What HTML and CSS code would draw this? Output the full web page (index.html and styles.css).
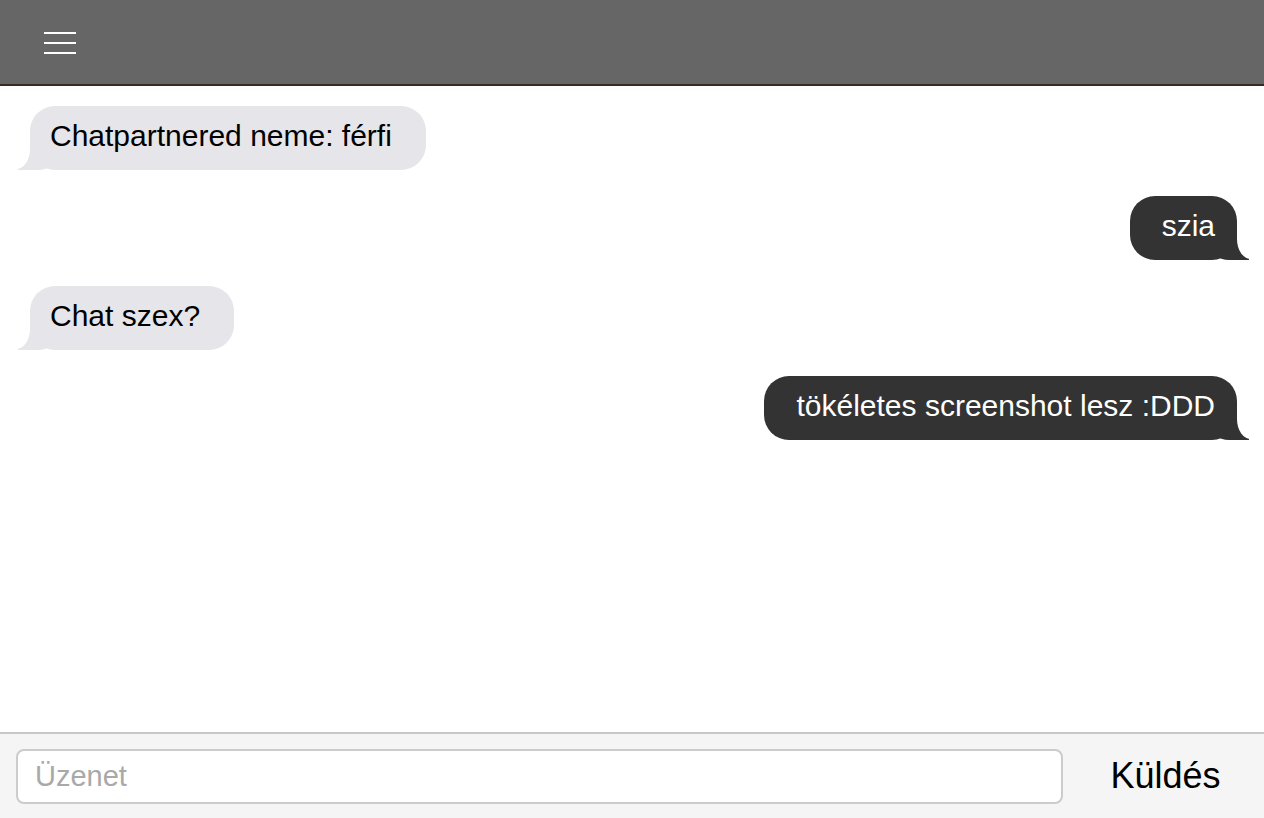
FILE: index.html
```html
<!DOCTYPE html>
<html lang="hu">
<head>
<meta charset="utf-8">
<title>Chat</title>
<link rel="stylesheet" href="styles.css">
</head>
<body>
<div class="app">
  <header class="topbar">
    <button class="menu" aria-label="Menü">
      <span class="menu-line"></span>
      <span class="menu-line"></span>
      <span class="menu-line"></span>
    </button>
  </header>
  <main class="messages">
    <div class="row row-them"><div class="bubble them">Chatpartnered neme: férfi</div></div>
    <div class="row row-me"><div class="bubble me">szia</div></div>
    <div class="row row-them"><div class="bubble them">Chat szex?</div></div>
    <div class="row row-me"><div class="bubble me">tökéletes screenshot lesz :DDD</div></div>
  </main>
  <footer class="composer">
    <input class="field" type="text" placeholder="Üzenet">
    <button class="send">Küldés</button>
  </footer>
</div>
</body>
</html>
```

FILE: styles.css
```css
html, body {
  margin: 0;
  padding: 0;
  height: 100%;
  background: #ffffff;
  font-family: "Liberation Sans", Arial, Helvetica, sans-serif;
}

.app {
  display: flex;
  flex-direction: column;
  height: 100vh;
}

.topbar {
  flex: 0 0 auto;
  height: 84px;
  background: #666666;
  border-bottom: 2px solid #3a2a23;
  display: flex;
  align-items: center;
  padding-left: 44px;
}

.menu {
  background: none;
  border: 0;
  padding: 0;
  width: 32px;
  height: 22px;
  display: flex;
  flex-direction: column;
  justify-content: space-between;
  cursor: pointer;
  margin-top: 2px;
}

.menu-line {
  display: block;
  height: 2px;
  background: #ffffff;
}

.messages {
  flex: 1 1 auto;
  display: flex;
  flex-direction: column;
  gap: 26px;
  padding: 20px 27px 0 30px;
  overflow: hidden;
}

.row {
  display: flex;
}

.row-them {
  justify-content: flex-start;
}

.row-me {
  justify-content: flex-end;
}

.bubble {
  position: relative;
  z-index: 0;
  font-size: 30px;
  line-height: 36px;
  height: 64px;
  box-sizing: border-box;
  padding: 12px 34px 16px 20px;
  border-radius: 25px;
  white-space: nowrap;
}

.them {
  background: #e5e5ea;
  color: #000000;
}

.me {
  background: #333333;
  color: #ffffff;
  padding: 12px 22px 16px 32px;
}

.them::before {
  content: "";
  position: absolute;
  z-index: -1;
  bottom: 0;
  left: -12px;
  height: 28px;
  border-left: 40px solid #e5e5ea;
  border-bottom-right-radius: 20px 18px;
}

.them::after {
  content: "";
  position: absolute;
  z-index: 1;
  bottom: 1px;
  left: -30px;
  width: 30px;
  height: 28px;
  background: #ffffff;
  border-bottom-right-radius: 14px 20px;
}

.me::before {
  content: "";
  position: absolute;
  z-index: -1;
  bottom: 0;
  right: -12px;
  height: 28px;
  border-right: 40px solid #333333;
  border-bottom-left-radius: 20px 18px;
}

.me::after {
  content: "";
  position: absolute;
  z-index: 1;
  bottom: 1px;
  right: -30px;
  width: 30px;
  height: 28px;
  background: #ffffff;
  border-bottom-left-radius: 14px 20px;
}

.composer {
  flex: 0 0 auto;
  height: 86px;
  box-sizing: border-box;
  background: #f5f5f5;
  border-top: 2px solid #c8c8c8;
  display: flex;
  align-items: center;
  padding-left: 16px;
}

.field {
  width: 1047px;
  height: 55px;
  box-sizing: border-box;
  border: 2px solid #cccccc;
  border-radius: 8px;
  background: #ffffff;
  font-family: "Liberation Sans", Arial, Helvetica, sans-serif;
  font-size: 29px;
  padding: 0 17px;
  color: #000000;
  outline: none;
}

.field::placeholder {
  color: #a9a9a9;
}

.send {
  flex: 1 1 auto;
  background: none;
  border: 0;
  font-family: "Liberation Sans", Arial, Helvetica, sans-serif;
  font-size: 36px;
  color: #000000;
  text-align: center;
  padding: 0 0 0 4px;
  cursor: pointer;
}
```
